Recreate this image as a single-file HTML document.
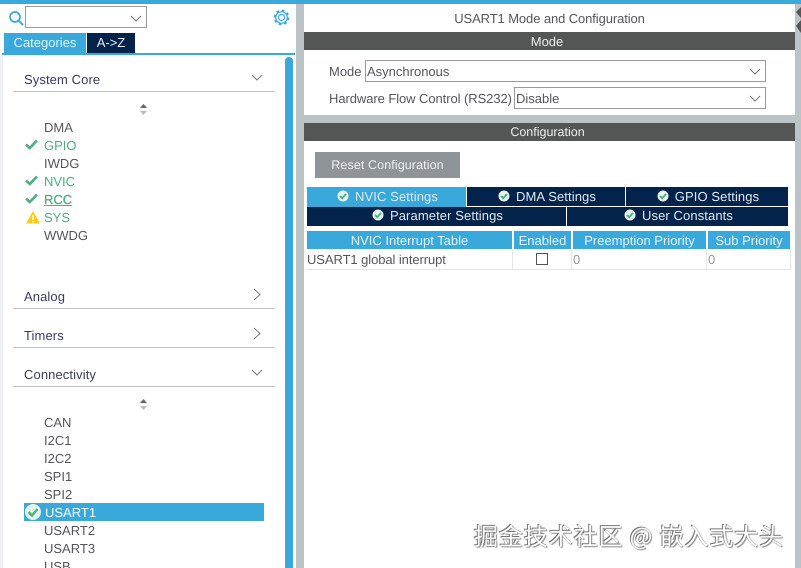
<!DOCTYPE html>
<html><head><meta charset="utf-8"><style>
html,body{margin:0;padding:0;background:#fff}
#p{position:relative;width:801px;height:568px;overflow:hidden;background:#fff;font-family:"Liberation Sans","Noto Sans CJK SC",sans-serif;font-size:13px;color:#4a4a50;text-rendering:geometricPrecision}
#p div{position:absolute;white-space:nowrap;box-sizing:border-box}
.t{line-height:18px}
.li{left:44px;line-height:18px;font-size:13px;color:#55555b}
.g{color:#4fae82}
.h{left:24px;font-size:13px;line-height:18px;color:#39395f;letter-spacing:.1px}
.r{left:13px;width:262px;height:1px;background:#bcc3c8}
.sel{background:#fff;border:1px solid #9a9a9a;height:22px;font-size:13px;line-height:21px;padding-left:1px;color:#55555b}
.tab{background:#03234b;color:#dfe8ef;text-align:center;font-size:13px;letter-spacing:.1px;padding-left:2px}
.th{background:#39a9dc;color:#e3f3fa;text-align:center;font-size:13px;line-height:19px;height:18px;top:231px}
.ic{display:inline-block;vertical-align:-1px;margin-right:6px}
</style></head><body><div id="p">
<div style="left:0;top:0;width:801px;height:4px;background:#39a9dc"></div>
<div style="left:296px;top:4px;width:8px;height:564px;background:#bbc3c7"></div>
<div style="left:795px;top:4px;width:6px;height:564px;background:#bbc3c7"></div>
<div style="left:304px;top:115px;width:491px;height:8px;background:#bbc3c7"></div>
<div style="left:0;top:55px;width:3px;height:513px;background:#eef0f1"></div>

<svg style="position:absolute;left:795px;top:6px" width="6" height="30"><path d="M6 1 1 6 6 12z M6 14 1 20 6 27z" fill="#555"/></svg>

<svg style="position:absolute;left:8px;top:10px" width="16" height="16" fill="none" stroke="#39a9dc" stroke-width="1.7"><circle cx="7" cy="7" r="5"/><path d="M10.8 10.8 15 15" stroke-width="2"/></svg>
<div style="left:25px;top:6px;width:122px;height:22px;border:1px solid #9a9a9a"></div>
<svg style="position:absolute;left:130px;top:15px" width="12" height="8" fill="none" stroke="#777" stroke-width="1"><path d="M1 1 6 6 11 1"/></svg>
<svg style="position:absolute;left:273px;top:9px" width="17" height="17" viewBox="0 0 17 17" fill="none" stroke="#39a9dc"><circle cx="8.5" cy="8.5" r="3" stroke-width="1.2"/><circle cx="8.5" cy="8.5" r="5.8" stroke-width="1.2"/><circle cx="8.5" cy="8.5" r="7" stroke-width="1.8" stroke-dasharray="2.6 2.9"/></svg>

<div style="left:4px;top:33px;width:82px;height:20px;background:#39a9dc;color:#dff1f9;text-align:center;line-height:20px">Categories</div>
<div style="left:87px;top:33px;width:48px;height:20px;background:#03234b;color:#eef;text-align:center;line-height:20px">A-&gt;Z</div>
<div style="left:2px;top:53px;width:293px;height:2px;background:#39a9dc"></div>
<div style="left:285px;top:57px;width:8px;height:511px;background:#39a9dc;border-radius:4px 4px 0 0"></div>

<div class="h" style="top:71px">System Core</div>
<svg style="position:absolute;left:251px;top:74px" width="12" height="8" fill="none" stroke="#777"><path d="M1 1 6 6 11 1"/></svg>
<div class="r" style="top:91px"></div>
<svg style="position:absolute;left:139px;top:104px" width="9" height="11"><path d="M4.5 0 8 4H1z" fill="#666"/><path d="M4.5 11 8 7H1z" fill="#bbb"/></svg>

<div class="li" style="top:119px">DMA</div>
<div class="li g" style="top:137px">GPIO</div>
<div class="li" style="top:155px">IWDG</div>
<div class="li g" style="top:173px">NVIC</div>
<div class="li g" style="top:191px;text-decoration:underline;-webkit-text-stroke:.3px #4fae82">RCC</div>
<div class="li g" style="top:209px">SYS</div>
<div class="li" style="top:227px">WWDG</div>
<svg style="position:absolute;left:25px;top:139px" width="13" height="11" fill="none" stroke="#4fae82" stroke-width="2.6"><path d="M1 5.5 4.8 9 12 1.5"/></svg>
<svg style="position:absolute;left:25px;top:175px" width="13" height="11" fill="none" stroke="#4fae82" stroke-width="2.6"><path d="M1 5.5 4.8 9 12 1.5"/></svg>
<svg style="position:absolute;left:25px;top:193px" width="13" height="11" fill="none" stroke="#4fae82" stroke-width="2.6"><path d="M1 5.5 4.8 9 12 1.5"/></svg>
<svg style="position:absolute;left:26px;top:211px" width="14" height="13"><path d="M7 0 14 12.5H0z" fill="#f6cd1a"/><path d="M7 4V9M7 10V11.5" stroke="#fff" stroke-width="1.4"/></svg>

<div class="h" style="top:288px">Analog</div>
<svg style="position:absolute;left:253px;top:288px" width="8" height="13" fill="none" stroke="#777"><path d="M1 1 7 6.5 1 12"/></svg>
<div class="r" style="top:308px"></div>
<div class="h" style="top:327px">Timers</div>
<svg style="position:absolute;left:253px;top:327px" width="8" height="13" fill="none" stroke="#777"><path d="M1 1 7 6.5 1 12"/></svg>
<div class="r" style="top:347px"></div>
<div class="h" style="top:366px">Connectivity</div>
<svg style="position:absolute;left:251px;top:369px" width="12" height="8" fill="none" stroke="#777"><path d="M1 1 6 6 11 1"/></svg>
<div class="r" style="top:386px"></div>
<svg style="position:absolute;left:139px;top:399px" width="9" height="11"><path d="M4.5 0 8 4H1z" fill="#666"/><path d="M4.5 11 8 7H1z" fill="#bbb"/></svg>

<div class="li" style="top:414px">CAN</div>
<div class="li" style="top:432px">I2C1</div>
<div class="li" style="top:450px">I2C2</div>
<div class="li" style="top:468px">SPI1</div>
<div class="li" style="top:486px">SPI2</div>
<div style="left:24px;top:503px;width:240px;height:18px;background:#39a9dc"></div>
<svg style="position:absolute;left:25px;top:504px" width="16" height="16"><circle cx="8" cy="8" r="8" fill="#e6f4ee"/><path d="M3.5 8 7 11.5 12.5 5" fill="none" stroke="#4fae82" stroke-width="2.4"/></svg>
<div class="li" style="top:504px;left:45px;color:#fff">USART1</div>
<div class="li" style="top:522px">USART2</div>
<div class="li" style="top:540px">USART3</div>
<div class="li" style="top:558px">USB</div>

<div class="t" style="left:304px;width:491px;top:10px;text-align:center;color:#55555b;letter-spacing:-.1px">USART1 Mode and Configuration</div>
<div style="left:304px;top:32px;width:486px;height:18px;background:none;color:#eee;text-align:center;line-height:19px;z-index:2">Mode</div>
<div style="left:304px;top:32px;width:491px;height:18px;background:#545655"></div>
<div class="t" style="left:329px;top:63px;color:#55555b">Mode</div>
<div class="sel" style="left:365px;top:60px;width:401px">Asynchronous</div>
<svg style="position:absolute;left:749px;top:68px" width="12" height="8" fill="none" stroke="#777"><path d="M1 1 6 6 11 1"/></svg>
<div class="t" style="left:329px;top:90px;color:#55555b;letter-spacing:-.07px">Hardware Flow Control (RS232)</div>
<div class="sel" style="left:514px;top:87px;width:252px">Disable</div>
<svg style="position:absolute;left:749px;top:95px" width="12" height="8" fill="none" stroke="#777"><path d="M1 1 6 6 11 1"/></svg>

<div style="left:304px;top:123px;width:491px;height:18px;background:#545655"></div>
<div style="left:304px;top:123px;width:487px;height:18px;color:#eee;text-align:center;line-height:19px;font-size:12.5px">Configuration</div>
<div style="left:315px;top:152px;width:145px;height:26px;background:#8f9499;color:#eef0f1;text-align:center;line-height:27px;font-size:12.5px;letter-spacing:.1px">Reset Configuration</div>

<svg width="0" height="0" style="position:absolute"><defs><g id="c"><circle cx="6" cy="6" r="5.5" fill="#e6f4ee"/><path d="M3 6 5.2 8.2 9 4" fill="none" stroke="#4fae82" stroke-width="1.9"/></g></defs></svg>
<div class="tab" style="left:307px;top:187px;width:159px;height:20px;line-height:20px;background:#39a9dc"><svg class="ic" width="12" height="12"><use href="#c"/></svg>NVIC Settings</div>
<div class="tab" style="left:467px;top:187px;width:158px;height:19px;line-height:20px"><svg class="ic" width="12" height="12"><use href="#c"/></svg>DMA Settings</div>
<div class="tab" style="left:626px;top:187px;width:162px;height:19px;line-height:20px"><svg class="ic" width="12" height="12"><use href="#c"/></svg>GPIO Settings</div>
<div class="tab" style="left:307px;top:207px;width:259px;height:19px;line-height:18px"><svg class="ic" width="12" height="12"><use href="#c"/></svg>Parameter Settings</div>
<div class="tab" style="left:567px;top:207px;width:221px;height:19px;line-height:18px"><svg class="ic" width="12" height="12"><use href="#c"/></svg>User Constants</div>

<div class="th" style="left:307px;width:205px">NVIC Interrupt Table</div>
<div class="th" style="left:514px;width:57px">Enabled</div>
<div class="th" style="left:573px;width:133px">Preemption Priority</div>
<div class="th" style="left:708px;width:82px">Sub Priority</div>
<div style="left:306px;top:269px;width:485px;height:1px;background:#e3e6e8"></div>
<div style="left:512px;top:250px;width:1px;height:19px;background:#e3e6e8"></div>
<div style="left:571px;top:250px;width:1px;height:19px;background:#e3e6e8"></div>
<div style="left:706px;top:250px;width:1px;height:19px;background:#e3e6e8"></div>
<div style="left:790px;top:250px;width:1px;height:19px;background:#e3e6e8"></div>
<div style="left:307px;top:251px;font-size:13px;line-height:18px;color:#55555b;letter-spacing:-.08px">USART1 global interrupt</div>
<div style="left:536px;top:253px;width:12px;height:12px;border:1px solid #555;background:#fff"></div>
<div style="left:573px;top:251px;line-height:18px;color:#9a9a9a">0</div>
<div style="left:708px;top:251px;line-height:18px;color:#9a9a9a">0</div>

<div style="left:474px;top:520px;font-size:24px;line-height:30px;color:#fff;font-family:'Noto Sans CJK SC',sans-serif;text-shadow:-1px -1px 0 #777,1px 1px 1px #888,0 0 1px #666;letter-spacing:.9px">掘金技术社区 @ 嵌入式大头</div>
</div></body></html>
